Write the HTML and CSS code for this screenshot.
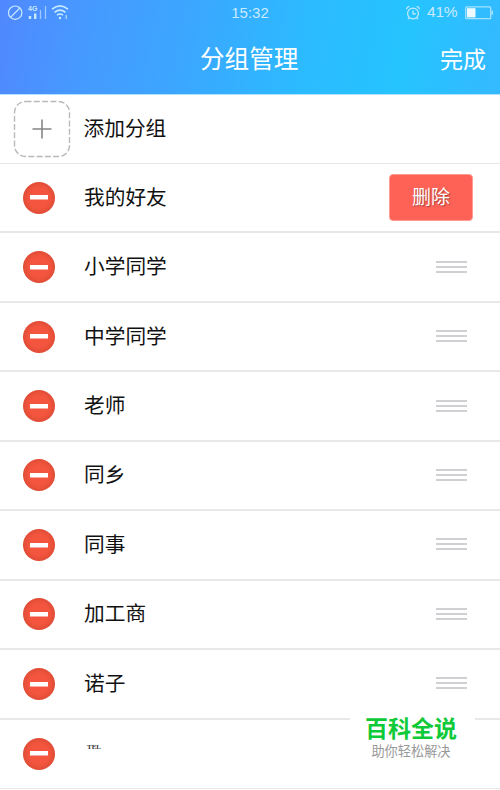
FILE: index.html
```
<!DOCTYPE html>
<html lang="zh-CN">
<head>
<meta charset="utf-8">
<title>分组管理</title>
<link rel="stylesheet" href="styles.css">
</head>
<body>
<header class="header">
  <div class="status">
    <svg class="status-left" width="72" height="24" viewBox="0 0 72 24" fill="none" stroke="currentColor">
      <circle cx="15.2" cy="12.7" r="6.7" stroke-width="1.2"/><path d="M10.5 17.4 19.9 8" stroke-width="1.2"/>
      <text class="network" x="28" y="11">4G</text>
      <path d="M30 16v3M35.2 13.5V19" stroke-width="2.4"/><path d="M40.5 10v9M45.5 6v13" stroke-width="1.3" opacity=".65"/>
      <path d="M52 9.2q8-6.6 16 0M54.5 12.3q5.5-4.4 11 0M57 15.2q3-2.3 6 0" stroke-width="1.6"/>
      <circle cx="60" cy="18" r="1.2" fill="currentColor" stroke="none"/><path d="M66.3 15v4" stroke-width="1.5" opacity=".7"/>
    </svg>
    <span class="clock">15:32</span>
    <div class="status-right">
      <svg width="16" height="16" viewBox="0 0 16 16" fill="none" stroke="currentColor" stroke-width="1.2">
        <circle cx="8" cy="8.5" r="5.4"/><path d="M8 5.4v3.4h2.8M1.6 4.2q.3-2.4 2.8-2.7M14.4 4.2q-.3-2.4-2.8-2.7M4.2 12.8l-1.2 1.3M11.8 12.8l1.2 1.3"/>
      </svg>
      <span class="percent">41%</span>
      <svg width="28" height="14" viewBox="0 0 28 14"><rect x=".7" y=".9" width="25" height="11.8" rx="1" fill="none" stroke="#a4e2ff" stroke-width="1.3"/><path d="M26.4 4.7h1.6v4h-1.6z" fill="#a4e2ff"/><path d="M2 2.2h8.5v9.2H2z" fill="#edfaff"/></svg>
    </div>
  </div>
  <div class="navbar"><h1 class="title">分组管理</h1><span class="done">完成</span></div>
</header>
<main class="list">
  <div class="row add">
    <svg class="add-icon" width="58" height="58" viewBox="0 0 58 58" fill="none"><rect x="1.5" y="1.5" width="55" height="55" rx="11" stroke="#b9b9b9" stroke-width="1.4" stroke-dasharray="6 2.3"/><path d="M19.5 29h19M29 19.5v19" stroke="#858585" stroke-width="1.6"/></svg>
    <span class="name">添加分组</span>
  </div>
  <div class="row"><i class="minus"></i><span class="name">我的好友</span><span class="delete">删除</span></div>
  <div class="row"><i class="minus"></i><span class="name">小学同学</span><i class="handle"></i></div>
  <div class="row"><i class="minus"></i><span class="name">中学同学</span><i class="handle"></i></div>
  <div class="row"><i class="minus"></i><span class="name">老师</span><i class="handle"></i></div>
  <div class="row"><i class="minus"></i><span class="name">同乡</span><i class="handle"></i></div>
  <div class="row"><i class="minus"></i><span class="name">同事</span><i class="handle"></i></div>
  <div class="row"><i class="minus"></i><span class="name">加工商</span><i class="handle"></i></div>
  <div class="row"><i class="minus"></i><span class="name">诺子</span><i class="handle"></i></div>
  <div class="row last"><i class="minus"></i><span class="tel">TEL</span></div>
</main>
<aside class="watermark"><strong class="brand">百科全说</strong><span class="slogan">助你轻松解决</span></aside>
</body>
</html>
```
FILE: styles.css
```
* { box-sizing: border-box; }
body {
  position: relative;
  width: 500px;
  height: 790px;
  margin: 0;
  overflow: hidden;
  background: #fff;
  font-family: "Liberation Sans", "Noto Sans CJK SC", sans-serif;
}
.header {
  height: 95px;
  border-bottom: 1px solid #b5e1ff;
  background: linear-gradient(100deg, #5088ff 0%, #469aff 18%, #3ba7ff 38%, #2cbaff 60%, #25c4ff 80%, #35b9ff 100%);
  color: #fff;
}
.status {
  display: grid;
  grid-template-columns: 1fr 60px 1fr;
  height: 25px;
  color: #c8eaff;
}
.network {
  fill: currentColor;
  stroke: none;
  font: bold 7px "Liberation Sans", sans-serif;
}
.clock { font-size: 15px; line-height: 25px; text-align: center; }
.status-right {
  display: flex;
  align-items: center;
  justify-content: flex-end;
  padding-right: 7px;
}
.percent {
  width: 31px;
  margin: 0 7px 1px 6px;
  font-size: 15.5px;
  line-height: 24px;
  letter-spacing: -.2px;
}
.navbar {
  display: grid;
  grid-template-columns: 1fr 100px 1fr;
  align-items: center;
  height: 69px;
}
.title {
  grid-column: 2;
  margin: 0;
  font-size: 24.6px;
  font-weight: 400;
  line-height: 36px;
  white-space: nowrap;
}
.done { justify-self: end; padding-right: 14px; font-size: 23px; line-height: 36px; }
.list { display: flex; flex-direction: column; }
.row {
  display: flex;
  flex: none;
  align-items: center;
  height: 69.44px;
  padding: 0 33px 0 23px;
  border-bottom: 2px solid #e8e8ea;
}
.row.add { height: 69px; padding-left: 12.5px; border-bottom-width: 1px; }
.row.last { border-bottom-width: 1px; }
.add-icon { margin-right: 13px; }
.name {
  color: #111;
  font-size: 20.7px;
  font-weight: 400;
  line-height: 30px;
}
.minus {
  width: 32px;
  height: 32px;
  margin-right: 29px;
  border-radius: 50%;
  background:
    linear-gradient(#fff, #fff) center / 18px 4.5px no-repeat,
    radial-gradient(circle, #f3553e 45%, #df4c36 72%);
}
.handle {
  width: 31px;
  height: 13px;
  margin-left: auto;
  background: linear-gradient(#cfcfd4 0 2px, transparent 2px 5px, #cfcfd4 5px 7px, transparent 7px 10px, #cfcfd4 10px 12px, transparent 12px);
}
.delete {
  width: 84px;
  height: 47px;
  margin: 0 -6px 0 auto;
  border: 1px solid #ff9b92;
  border-radius: 4px;
  background: #fe6257;
  color: #fff;
  font-size: 19px;
  line-height: 45px;
  text-align: center;
  text-shadow: 1px 1px 1px #a24640;
}
.tel {
  margin: -14px 0 0 3px;
  color: #333;
  font: bold 7px "Liberation Serif", serif;
}
.watermark {
  position: absolute;
  top: 712px;
  left: 350px;
  display: flex;
  flex-direction: column;
  align-items: center;
  width: 125px;
  height: 52px;
  padding-right: 3px;
  background: #fff;
}
.brand { color: #0fca38; font-size: 23px; font-weight: 700; line-height: 34px; }
.slogan { color: #999; font-size: 13.2px; line-height: 12px; }
```
